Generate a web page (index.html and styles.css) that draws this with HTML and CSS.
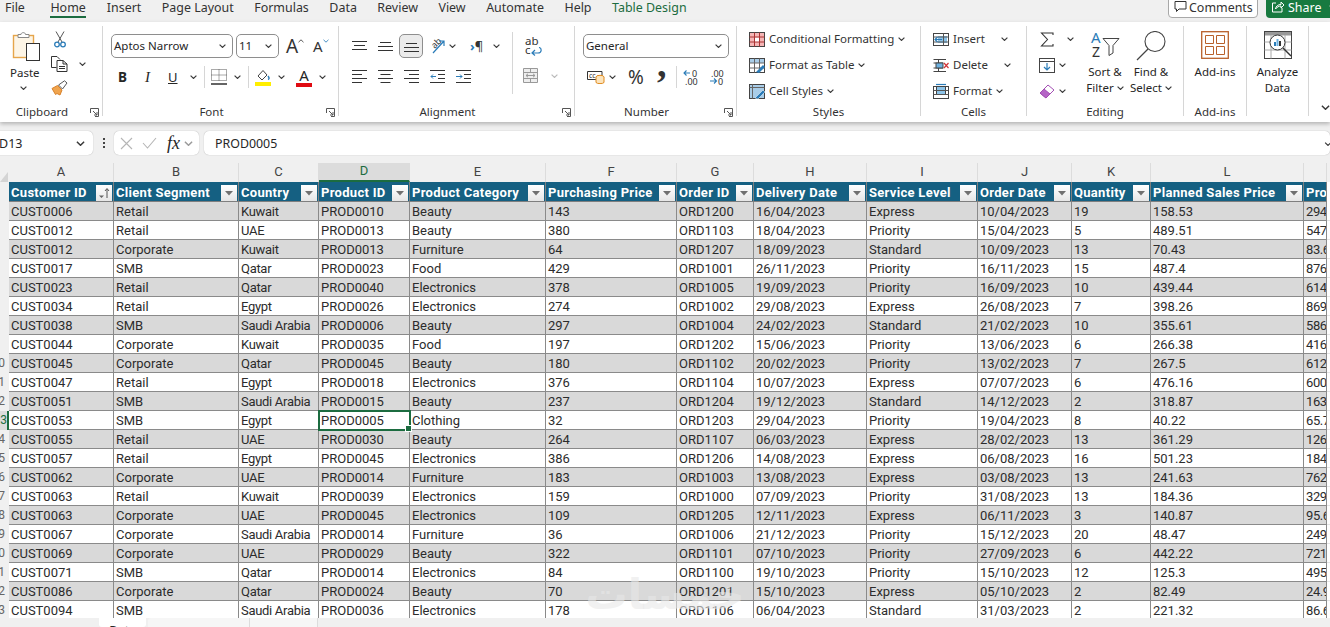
FILE: index.html
```html
<!DOCTYPE html>
<html lang="en">
<head>
<meta charset="utf-8">
<title>Excel</title>
<link rel="stylesheet" href="styles.css">
</head>
<body>
<svg class="defs" aria-hidden="true"><symbol id="chev" viewBox="0 0 7 4"><path d="M.6.6 3.5 3.4 6.4.6" fill="none" stroke="#3a3a3a" stroke-width="1.2"/></symbol><symbol id="launch" viewBox="0 0 9 9"><path d="M.5 5V.5H8.500V8.500H5M3 3l4 4M7 4v3H4" fill="none" stroke="#555" stroke-width="1"/></symbol></svg>

<nav class="tabs">
  <span class="tab">File</span><span class="tab tab-on">Home</span><span class="tab">Insert</span><span class="tab">Page Layout</span><span class="tab">Formulas</span><span class="tab">Data</span><span class="tab">Review</span><span class="tab">View</span><span class="tab">Automate</span><span class="tab">Help</span><span class="tab tab-design">Table Design</span>
  <span class="tabs-right">
    <span class="btn-comments"><svg width="13" height="13" viewBox="0 0 13 13"><path d="M1 1.500H12V9H5L2.500 11.500V9H1Z" fill="none" stroke="#333"/></svg>Comments</span>
    <span class="btn-share"><svg width="14" height="13" viewBox="0 0 14 13"><path d="M5 3H1.500V12H11V8M4.500 9C5 6 7 4.500 10 4.500V2L13 5 10 8V6C8 6 6 7 4.500 9Z" fill="none" stroke="#fff"/></svg>Share<svg class="chev" viewBox="0 0 7 4"><use href="#chev"/></svg></span>
  </span>
</nav>

<section class="ribbon">
  <div class="group g-clip">
    <div class="clip-body">
      <div class="paste">
        <svg width="28" height="30" viewBox="0 0 28 30"><rect x="1.500" y="4.500" width="20" height="22" fill="#fdf5e6" stroke="#e6a54a" stroke-width="1.400"/><path d="M6 6.500V3.500H9C9 1 13.500 1 13.500 3.500H17V6.500Z" fill="#fff" stroke="#888"/><rect x="14.500" y="12.500" width="13" height="17" fill="#fff" stroke="#333"/></svg>
        <span class="paste-text">Paste</span>
        <svg class="chev" viewBox="0 0 7 4"><use href="#chev"/></svg>
      </div>
      <div class="clip-tools">
        <svg width="12" height="17" viewBox="0 0 12 17"><path d="M2 .5 8 11M10 .5 4 11" stroke="#555" fill="none"/><circle cx="3" cy="13.500" r="2.300" fill="none" stroke="#2b7cb8" stroke-width="1.300"/><circle cx="9" cy="13.500" r="2.300" fill="none" stroke="#2b7cb8" stroke-width="1.300"/></svg>
        <span class="copy-line"><svg width="17" height="16" viewBox="0 0 17 16"><path d="M5.500 11.500H.5V.5H6L9 3.500M6 4.500H12L16 8V15.500H6ZM12 4.500V8H16M8 10.500H14M8 12.500H14" fill="none" stroke="#333"/></svg><svg class="chev" viewBox="0 0 7 4"><use href="#chev"/></svg></span>
        <svg width="17" height="16" viewBox="0 0 17 16"><path d="M1 8.500 6.500 5.500 11 10 9 15 6 13.500 4.500 14.500Z" fill="#f0a44e" stroke="#d8822a"/><path d="M7.500 5 13.500.8 16 3 11.500 9Z" fill="#fff" stroke="#555"/></svg>
      </div>
    </div>
    <div class="group-label pad-launch">Clipboard</div><svg class="launch" viewBox="0 0 9 9"><use href="#launch"/></svg>
  </div>

  <div class="group g-font">
    <div class="two-rows">
      <div class="row row-font1">
        <span class="combo combo-font">Aptos Narrow<svg class="chev" viewBox="0 0 7 4"><use href="#chev"/></svg></span>
        <span class="combo combo-size">11<svg class="chev" viewBox="0 0 7 4"><use href="#chev"/></svg></span>
        <span class="growa">A<svg class="chev-up" viewBox="0 0 7 4"><path d="M.6 3.400 3.500.6 6.400 3.400" fill="none" stroke="#3a3a3a"/></svg></span>
        <span class="growa growa-sm">A<svg class="chev-up" viewBox="0 0 7 4"><path d="M.6.6 3.500 3.400 6.400.6" fill="none" stroke="#2b7cb8"/></svg></span>
      </div>
      <div class="row row-font2">
        <b class="t-b">B</b><i class="t-i">I</i><u class="t-u">U</u><svg class="chev" viewBox="0 0 7 4"><use href="#chev"/></svg><span class="vsep"></span>
        <svg width="16" height="16" viewBox="0 0 16 16"><path d="M.5.5H15.500V11.500H.5ZM8 .5V11.500M.5 6H15.500" fill="none" stroke="#555" stroke-dasharray="1 1"/><path d="M0 15H16" stroke="#222" stroke-width="1.400"/></svg>
        <svg class="chev" viewBox="0 0 7 4"><use href="#chev"/></svg><span class="vsep"></span>
        <svg width="16" height="17" viewBox="0 0 16 17"><path d="M3 7 8 1.500 12 6 7 11Z" fill="#fff" stroke="#444"/><path d="M13 7C14.500 9 14.500 10 13 10.500" stroke="#2b7cb8" stroke-width="1.400" fill="none"/><rect y="13" width="16" height="4" fill="#ffee00"/></svg>
        <svg class="chev" viewBox="0 0 7 4"><use href="#chev"/></svg>
        <span class="t-color">A</span>
        <svg class="chev" viewBox="0 0 7 4"><use href="#chev"/></svg>
      </div>
    </div>
    <div class="group-label pad-launch">Font</div><svg class="launch" viewBox="0 0 9 9"><use href="#launch"/></svg>
  </div>

  <div class="group g-align">
    <div class="align-body">
      <div class="two-rows">
        <div class="row row-al1">
          <svg width="15" height="11" viewBox="0 0 15 11"><path d="M0 .5H15M2 4.500H13M0 8.500H15" stroke="#333"/></svg>
          <svg class="down4" width="15" height="11" viewBox="0 0 15 11"><path d="M2 .5H13M0 4.500H15M0 8.500H15" stroke="#333"/></svg>
          <span class="active-btn"><svg width="15" height="11" viewBox="0 0 15 11"><path d="M2 .5H13M0 4.500H15M0 8.500H15" stroke="#333"/></svg></span>
          <svg width="17" height="17" viewBox="0 0 17 17"><text x="2" y="10" font-size="9" transform="rotate(-45 5 6)" class="svgt">ab</text><path d="M4 15 15 3M10 3H15V8" fill="none" stroke="#2b7cb8" stroke-width="1.200"/></svg>
          <svg class="chev" viewBox="0 0 7 4"><use href="#chev"/></svg>
          <span class="para"><span class="para-mark">›</span>¶</span>
          <svg class="chev" viewBox="0 0 7 4"><use href="#chev"/></svg>
        </div>
        <div class="row row-al2">
          <svg width="15" height="14" viewBox="0 0 15 14"><path d="M0 .5H15M0 4.500H10M0 8.500H15M0 12.500H10" stroke="#333"/></svg>
          <svg width="15" height="14" viewBox="0 0 15 14"><path d="M0 .5H15M2.500 4.500H12.500M0 8.500H15M2.500 12.500H12.500" stroke="#333"/></svg>
          <svg width="15" height="14" viewBox="0 0 15 14"><path d="M0 .5H15M5 4.500H15M0 8.500H15M5 12.500H15" stroke="#333"/></svg>
          <svg width="15" height="14" viewBox="0 0 15 14"><path d="M0 .5H15M8 4.500H15M8 8.500H15M0 12.500H15" stroke="#333"/><path d="M6 6.500H1M3 4.500 1 6.500 3 8.500" fill="none" stroke="#2b7cb8"/></svg>
          <svg width="15" height="14" viewBox="0 0 15 14"><path d="M0 .5H15M8 4.500H15M8 8.500H15M0 12.500H15" stroke="#333"/><path d="M0 6.500H6M4 4.500 6 6.500 4 8.500" fill="none" stroke="#2b7cb8"/></svg>
        </div>
      </div>
      <span class="vsep vsep-tall"></span>
      <div class="wrap-col">
        <span class="wrap-text">ab<br>c<svg class="wrap-arrow" width="11" height="9" viewBox="0 0 11 9"><path d="M8 .5C11 1 11 6 7 6H1M4 3 1 6 4 8.500" fill="none" stroke="#2b7cb8" stroke-width="1.200"/></svg></span>
        <span class="merge"><svg width="15" height="15" viewBox="0 0 15 15"><path d="M.5.5H14.500V14.500H.5ZM.5 4.500H14.500M.5 10.500H14.500M7.500.5V4.500M7.500 10.500V14.500" fill="#eee" stroke="#999"/><path d="M3 7.500H12M5 5.800 3 7.500 5 9.200M10 5.800 12 7.500 10 9.200" fill="none" stroke="#999"/></svg><svg class="chev dim" viewBox="0 0 7 4"><use href="#chev"/></svg></span>
      </div>
    </div>
    <div class="group-label pad-launch">Alignment</div><svg class="launch" viewBox="0 0 9 9"><use href="#launch"/></svg>
  </div>

  <div class="group g-num">
    <div class="two-rows">
      <div class="row"><span class="combo combo-num">General<svg class="chev" viewBox="0 0 7 4"><use href="#chev"/></svg></span></div>
      <div class="row row-num2">
        <svg width="18" height="14" viewBox="0 0 18 14"><path d="M.5 1.500H15V9.500H.5Z" fill="#fff" stroke="#333"/><text x="2" y="7.800" font-size="7" class="svgt">cc</text><ellipse cx="13" cy="7" rx="4" ry="1.700" fill="#fbe4bd" stroke="#e08a1e"/><path d="M9 7V12.500C10 14 16 14 17 12.500V7" fill="#fbe4bd" stroke="#e08a1e"/></svg>
        <svg class="chev" viewBox="0 0 7 4"><use href="#chev"/></svg>
        <span class="t-pct">%</span>
        <span class="t-comma">,</span>
        <span class="vsep"></span>
        <span class="dec"><svg width="16" height="16" viewBox="0 0 16 16"><path d="M7 4H1M3.500 1.500 1 4 3.500 6.500" fill="none" stroke="#2b7cb8" stroke-width="1.100"/><text x="9" y="7.500" font-size="9" class="svgt">0</text><text x="2" y="15.500" font-size="9" class="svgt">.00</text></svg></span>
        <span class="dec"><svg width="16" height="16" viewBox="0 0 16 16"><text x="2" y="7.500" font-size="9" class="svgt">.00</text><path d="M1 12H7.500M5 9.500 7.500 12 5 14.500" fill="none" stroke="#2b7cb8" stroke-width="1.100"/><text x="9" y="15.500" font-size="9" class="svgt">0</text></svg></span>
      </div>
    </div>
    <div class="group-label pad-launch">Number</div><svg class="launch" viewBox="0 0 9 9"><use href="#launch"/></svg>
  </div>

  <div class="group g-styles">
    <div class="stack">
      <div class="line"><svg width="16" height="15" viewBox="0 0 16 15"><rect x=".5" y=".5" width="15" height="14" fill="#f5b5b5" stroke="#444"/><path d="M5.500 5.500H10.500V10H5.500Z" fill="#fff"/><path d="M.5 5H15.500M.5 10H15.500M5.500.5V14.500M10.500.5V14.500" stroke="#a33" fill="none"/></svg>Conditional Formatting<svg class="chev" viewBox="0 0 7 4"><use href="#chev"/></svg></div>
      <div class="line"><svg width="16" height="15" viewBox="0 0 16 15"><rect x=".5" y=".5" width="15" height="14" fill="#fff" stroke="#444"/><rect x="1" y="1" width="14" height="4" fill="#a9cde8"/><path d="M.5 5H15.500M.5 10H15.500M5.500.5V14.500M10.500.5V14.500" stroke="#666" fill="none"/><path d="M7 14 14 7 16 9 10 15Z" fill="#2b7cb8"/></svg>Format as Table<svg class="chev" viewBox="0 0 7 4"><use href="#chev"/></svg></div>
      <div class="line"><svg width="16" height="15" viewBox="0 0 16 15"><rect x=".5" y=".5" width="15" height="14" fill="#a9cde8" stroke="#444"/><path d="M.5 3.500H15.500M3.500.5V14.500" stroke="#666" fill="none"/><path d="M6 14 14 6 16 8 9 15Z" fill="#2b7cb8" stroke="#fff" stroke-width=".5"/></svg>Cell Styles<svg class="chev" viewBox="0 0 7 4"><use href="#chev"/></svg></div>
    </div>
    <div class="group-label">Styles</div>
  </div>

  <div class="group g-cells">
    <div class="stack">
      <div class="line"><svg width="16" height="15" viewBox="0 0 16 15"><rect x=".5" y="1.500" width="15" height="12" fill="#fff" stroke="#444"/><rect x="5" y="4" width="9" height="7" fill="#8cc3e8"/><path d="M.5 5H15.500M.5 10H15.500M10.500 1.500V13.500" stroke="#555"/><path d="M9 7.500H2M4.500 5 2 7.500 4.500 10" fill="none" stroke="#2b7cb8" stroke-width="1.200"/></svg>Insert<svg class="chev chev-far" viewBox="0 0 7 4"><use href="#chev"/></svg></div>
      <div class="line"><svg width="16" height="15" viewBox="0 0 16 15"><path d="M.5 1.500H13M.5 13.500H13M5.500 1.500V13.500M.5 5H10M.5 10H10" stroke="#444" fill="none"/><rect x="3" y="5" width="7" height="5" fill="#6db1e0" stroke="#444"/><path d="M11 5 15.500 10M15.500 5 11 10" stroke="#d13438" stroke-width="1.200"/></svg>Delete<svg class="chev chev-far2" viewBox="0 0 7 4"><use href="#chev"/></svg></div>
      <div class="line"><svg width="16" height="16" viewBox="0 0 16 16"><rect x=".5" y="3.500" width="15" height="12" fill="#fff" stroke="#444"/><rect x="3.500" y="3.500" width="9" height="8" fill="#8cc3e8" stroke="#444"/><path d="M.5 7.500H15.500M.5 11.500H15.500" stroke="#555"/><path d="M3 1.500H13" stroke="#2b7cb8" stroke-width="1.200"/></svg>Format<svg class="chev" viewBox="0 0 7 4"><use href="#chev"/></svg></div>
    </div>
    <div class="group-label">Cells</div>
  </div>

  <div class="group g-edit">
    <div class="edit-body">
      <div class="stack stack-edit">
        <div class="line"><svg width="16" height="15" viewBox="0 0 16 15"><path d="M14 3V1H2.500L8.500 7.500 2.500 14H14V12" fill="none" stroke="#333" stroke-width="1.100"/></svg><svg class="chev chev-sigma" viewBox="0 0 7 4"><use href="#chev"/></svg></div>
        <div class="line"><svg width="16" height="15" viewBox="0 0 16 15"><rect x=".5" y=".5" width="15" height="14" fill="#fff" stroke="#444"/><path d="M.5 3.500H15.500" stroke="#444"/><path d="M8 5V12M5 9 8 12 11 9" fill="none" stroke="#2b7cb8" stroke-width="1.200"/></svg><svg class="chev" viewBox="0 0 7 4"><use href="#chev"/></svg></div>
        <div class="line"><svg width="16" height="15" viewBox="0 0 16 15"><path d="M1 9 9 1 15 6 7 14Z" fill="#fff" stroke="#a34fb4"/><path d="M1 9 5 5 11 10 7 14Z" fill="#b565c6" stroke="#a34fb4"/></svg><svg class="chev" viewBox="0 0 7 4"><use href="#chev"/></svg></div>
      </div>
      <div class="big">
        <svg class="big-icon icon-sort" width="30" height="27" viewBox="0 0 30 27"><text x="1" y="12" font-size="15" fill="#2b7cb8" class="svgt">A</text><text x="2" y="26" font-size="14" class="svgt">Z</text><path d="M13 7.500H29L23 14.500V22L19 24.500V14.500Z" fill="#fff" stroke="#444"/></svg>
        <span>Sort &amp;</span>
        <span>Filter<svg class="chev" viewBox="0 0 7 4"><use href="#chev"/></svg></span>
      </div>
      <div class="big">
        <svg class="big-icon icon-find" width="30" height="30" viewBox="0 0 30 30"><circle cx="19" cy="10.500" r="10" fill="#fff" stroke="#444" stroke-width="1.100"/><path d="M12 18 1 29" stroke="#444" stroke-width="1.200"/></svg>
        <span>Find &amp;</span>
        <span>Select<svg class="chev" viewBox="0 0 7 4"><use href="#chev"/></svg></span>
      </div>
    </div>
    <div class="group-label">Editing</div>
  </div>

  <div class="group g-add">
    <div class="big">
      <svg class="big-icon" width="28" height="28" viewBox="0 0 28 28"><rect x=".7" y=".7" width="26.600" height="26.600" fill="#fff" stroke="#b8602a" stroke-width="1.300"/><path d="M4.500 4.500H12.500V12.500H4.500ZM15.500 4.500H23.500V12.500H15.500ZM4.500 15.500H12.500V23.500H4.500ZM15.500 15.500H23.500V23.500H15.500Z" fill="none" stroke="#b8602a"/></svg>
      <span>Add-ins</span>
    </div>
    <div class="group-label">Add-ins</div>
  </div>

  <div class="group g-analyze">
    <div class="big">
      <svg class="big-icon" width="28" height="28" viewBox="0 0 28 28"><rect x=".5" y=".5" width="27" height="27" fill="#fff" stroke="#444"/><rect x="1" y="1" width="26" height="3.500" fill="#999"/><path d="M.5 11H27.500M.5 19H27.500M7 4V27.500M21 4V27.500" stroke="#aaa"/><circle cx="13.500" cy="11.500" r="7.500" fill="#fff" stroke="#333"/><path d="M10 11H12V15H10Z" fill="#2b7cb8"/><path d="M12.500 8H14.500V15H12.500Z" fill="#6db1e0"/><path d="M15 10H17V15H15Z" fill="#333"/><path d="M19 17 27 25" stroke="#333" stroke-width="1.400"/></svg>
      <span>Analyze</span>
      <span>Data</span>
    </div>
  </div>
  <svg class="collapse" viewBox="0 0 7 4"><use href="#chev"/></svg>
</section>

<section class="fbar">
  <div class="namebox">D13<svg class="chev" viewBox="0 0 7 4"><use href="#chev"/></svg></div>
  <div class="dots"><i></i><i></i><i></i></div>
  <div class="fbtns">
    <svg width="13" height="13" viewBox="0 0 13 13"><path d="M1 1 12 12M12 1 1 12" stroke="#b5b5b5" stroke-width="1.100"/></svg>
    <svg width="15" height="12" viewBox="0 0 15 12"><path d="M1 6 5.500 11 14 1" fill="none" stroke="#b5b5b5" stroke-width="1.100"/></svg>
    <span class="fx">fx</span>
    <svg class="chev" viewBox="0 0 7 4"><use href="#chev"/></svg>
  </div>
  <div class="finput">PROD0005<svg class="chev" viewBox="0 0 7 4"><use href="#chev"/></svg></div>
</section>

<main class="grid">
<table class="sheet">
<colgroup><col class="c0"><col class="c1"><col class="c2"><col class="c3"><col class="c4"><col class="c5"><col class="c6"><col class="c7"><col class="c8"><col class="c9"><col class="c10"><col class="c11"><col class="c12"><col class="c13"><col class="c14"></colgroup>
<thead>
<tr class="letters"><th class="corner"><svg width="8" height="10" viewBox="0 0 8 10"><path d="M8 0V10H0Z" fill="#d4d4d4"/></svg></th><th>A</th><th>B</th><th>C</th><th class="letter-on">D</th><th>E</th><th>F</th><th>G</th><th>H</th><th>I</th><th>J</th><th>K</th><th>L</th><th></th><th class="blank"></th></tr>
<tr class="heads"><th class="rh"></th>
<th><div class="hc">Customer ID<span class="fb"><svg width="16" height="16" viewBox="0 0 16 16"><path d="M3 10.500H8L5.500 13Z" fill="#666"/><path d="M11 13V4M9 6 11 3.500 13 6" fill="none" stroke="#555"/></svg></span></div></th>
<th><div class="hc">Client Segment<span class="fb"><svg width="16" height="16" viewBox="0 0 16 16"><path d="M4 6H12L8 10.500Z" fill="#707070"/></svg></span></div></th>
<th><div class="hc">Country<span class="fb"><svg width="16" height="16" viewBox="0 0 16 16"><path d="M4 6H12L8 10.500Z" fill="#707070"/></svg></span></div></th>
<th><div class="hc">Product ID<span class="fb"><svg width="16" height="16" viewBox="0 0 16 16"><path d="M4 6H12L8 10.500Z" fill="#707070"/></svg></span></div></th>
<th><div class="hc">Product Category<span class="fb"><svg width="16" height="16" viewBox="0 0 16 16"><path d="M4 6H12L8 10.500Z" fill="#707070"/></svg></span></div></th>
<th><div class="hc">Purchasing Price<span class="fb"><svg width="16" height="16" viewBox="0 0 16 16"><path d="M4 6H12L8 10.500Z" fill="#707070"/></svg></span></div></th>
<th><div class="hc">Order ID<span class="fb"><svg width="16" height="16" viewBox="0 0 16 16"><path d="M4 6H12L8 10.500Z" fill="#707070"/></svg></span></div></th>
<th><div class="hc">Delivery Date<span class="fb"><svg width="16" height="16" viewBox="0 0 16 16"><path d="M4 6H12L8 10.500Z" fill="#707070"/></svg></span></div></th>
<th><div class="hc">Service Level<span class="fb"><svg width="16" height="16" viewBox="0 0 16 16"><path d="M4 6H12L8 10.500Z" fill="#707070"/></svg></span></div></th>
<th><div class="hc">Order Date<span class="fb"><svg width="16" height="16" viewBox="0 0 16 16"><path d="M4 6H12L8 10.500Z" fill="#707070"/></svg></span></div></th>
<th><div class="hc">Quantity<span class="fb"><svg width="16" height="16" viewBox="0 0 16 16"><path d="M4 6H12L8 10.500Z" fill="#707070"/></svg></span></div></th>
<th><div class="hc">Planned Sales Price<span class="fb"><svg width="16" height="16" viewBox="0 0 16 16"><path d="M4 6H12L8 10.500Z" fill="#707070"/></svg></span></div></th>
<th><div class="hc">Profit</div></th>
<th class="blank"></th></tr>
</thead>
<tbody>
<tr><th class="rh"></th><td>CUST0006</td><td>Retail</td><td>Kuwait</td><td>PROD0010</td><td>Beauty</td><td>143</td><td>ORD1200</td><td>16/04/2023</td><td>Express</td><td>10/04/2023</td><td>19</td><td>158.53</td><td>294</td><td class="blank"></td></tr>
<tr><th class="rh"></th><td>CUST0012</td><td>Retail</td><td>UAE</td><td>PROD0013</td><td>Beauty</td><td>380</td><td>ORD1103</td><td>18/04/2023</td><td>Priority</td><td>15/04/2023</td><td>5</td><td>489.51</td><td>547</td><td class="blank"></td></tr>
<tr><th class="rh"></th><td>CUST0012</td><td>Corporate</td><td>Kuwait</td><td>PROD0013</td><td>Furniture</td><td>64</td><td>ORD1207</td><td>18/09/2023</td><td>Standard</td><td>10/09/2023</td><td>13</td><td>70.43</td><td>83.6</td><td class="blank"></td></tr>
<tr><th class="rh"></th><td>CUST0017</td><td>SMB</td><td>Qatar</td><td>PROD0023</td><td>Food</td><td>429</td><td>ORD1001</td><td>26/11/2023</td><td>Priority</td><td>16/11/2023</td><td>15</td><td>487.4</td><td>876</td><td class="blank"></td></tr>
<tr><th class="rh"></th><td>CUST0023</td><td>Retail</td><td>Qatar</td><td>PROD0040</td><td>Electronics</td><td>378</td><td>ORD1005</td><td>19/09/2023</td><td>Priority</td><td>16/09/2023</td><td>10</td><td>439.44</td><td>614</td><td class="blank"></td></tr>
<tr><th class="rh"></th><td>CUST0034</td><td>Retail</td><td>Egypt</td><td>PROD0026</td><td>Electronics</td><td>274</td><td>ORD1002</td><td>29/08/2023</td><td>Express</td><td>26/08/2023</td><td>7</td><td>398.26</td><td>869</td><td class="blank"></td></tr>
<tr><th class="rh"></th><td>CUST0038</td><td>SMB</td><td>Saudi Arabia</td><td>PROD0006</td><td>Beauty</td><td>297</td><td>ORD1004</td><td>24/02/2023</td><td>Standard</td><td>21/02/2023</td><td>10</td><td>355.61</td><td>586</td><td class="blank"></td></tr>
<tr><th class="rh"></th><td>CUST0044</td><td>Corporate</td><td>Kuwait</td><td>PROD0035</td><td>Food</td><td>197</td><td>ORD1202</td><td>15/06/2023</td><td>Priority</td><td>13/06/2023</td><td>6</td><td>266.38</td><td>416</td><td class="blank"></td></tr>
<tr><th class="rh">10</th><td>CUST0045</td><td>Corporate</td><td>Qatar</td><td>PROD0045</td><td>Beauty</td><td>180</td><td>ORD1102</td><td>20/02/2023</td><td>Priority</td><td>13/02/2023</td><td>7</td><td>267.5</td><td>612</td><td class="blank"></td></tr>
<tr><th class="rh">11</th><td>CUST0047</td><td>Retail</td><td>Egypt</td><td>PROD0018</td><td>Electronics</td><td>376</td><td>ORD1104</td><td>10/07/2023</td><td>Express</td><td>07/07/2023</td><td>6</td><td>476.16</td><td>600</td><td class="blank"></td></tr>
<tr><th class="rh">12</th><td>CUST0051</td><td>SMB</td><td>Saudi Arabia</td><td>PROD0015</td><td>Beauty</td><td>237</td><td>ORD1204</td><td>19/12/2023</td><td>Standard</td><td>14/12/2023</td><td>2</td><td>318.87</td><td>163</td><td class="blank"></td></tr>
<tr><th class="rh rh-on">13</th><td>CUST0053</td><td>SMB</td><td>Egypt</td><td class="cell-on">PROD0005</td><td>Clothing</td><td>32</td><td>ORD1203</td><td>29/04/2023</td><td>Priority</td><td>19/04/2023</td><td>8</td><td>40.22</td><td>65.7</td><td class="blank"></td></tr>
<tr><th class="rh">14</th><td>CUST0055</td><td>Retail</td><td>UAE</td><td>PROD0030</td><td>Beauty</td><td>264</td><td>ORD1107</td><td>06/03/2023</td><td>Express</td><td>28/02/2023</td><td>13</td><td>361.29</td><td>126</td><td class="blank"></td></tr>
<tr><th class="rh">15</th><td>CUST0057</td><td>Retail</td><td>Egypt</td><td>PROD0045</td><td>Electronics</td><td>386</td><td>ORD1206</td><td>14/08/2023</td><td>Express</td><td>06/08/2023</td><td>16</td><td>501.23</td><td>184</td><td class="blank"></td></tr>
<tr><th class="rh">16</th><td>CUST0062</td><td>Corporate</td><td>UAE</td><td>PROD0014</td><td>Furniture</td><td>183</td><td>ORD1003</td><td>13/08/2023</td><td>Express</td><td>03/08/2023</td><td>13</td><td>241.63</td><td>762</td><td class="blank"></td></tr>
<tr><th class="rh">17</th><td>CUST0063</td><td>Retail</td><td>Kuwait</td><td>PROD0039</td><td>Electronics</td><td>159</td><td>ORD1000</td><td>07/09/2023</td><td>Priority</td><td>31/08/2023</td><td>13</td><td>184.36</td><td>329</td><td class="blank"></td></tr>
<tr><th class="rh">18</th><td>CUST0063</td><td>Corporate</td><td>UAE</td><td>PROD0045</td><td>Electronics</td><td>109</td><td>ORD1205</td><td>12/11/2023</td><td>Express</td><td>06/11/2023</td><td>3</td><td>140.87</td><td>95.6</td><td class="blank"></td></tr>
<tr><th class="rh">19</th><td>CUST0067</td><td>Corporate</td><td>Saudi Arabia</td><td>PROD0014</td><td>Furniture</td><td>36</td><td>ORD1006</td><td>21/12/2023</td><td>Priority</td><td>15/12/2023</td><td>20</td><td>48.47</td><td>249</td><td class="blank"></td></tr>
<tr><th class="rh">20</th><td>CUST0069</td><td>Corporate</td><td>UAE</td><td>PROD0029</td><td>Beauty</td><td>322</td><td>ORD1101</td><td>07/10/2023</td><td>Priority</td><td>27/09/2023</td><td>6</td><td>442.22</td><td>721</td><td class="blank"></td></tr>
<tr><th class="rh">21</th><td>CUST0071</td><td>SMB</td><td>Qatar</td><td>PROD0014</td><td>Electronics</td><td>84</td><td>ORD1100</td><td>19/10/2023</td><td>Priority</td><td>15/10/2023</td><td>12</td><td>125.3</td><td>495</td><td class="blank"></td></tr>
<tr><th class="rh">22</th><td>CUST0086</td><td>Corporate</td><td>Qatar</td><td>PROD0024</td><td>Beauty</td><td>70</td><td>ORD1201</td><td>15/10/2023</td><td>Express</td><td>05/10/2023</td><td>2</td><td>82.49</td><td>24.9</td><td class="blank"></td></tr>
<tr><th class="rh">23</th><td>CUST0094</td><td>SMB</td><td>Saudi Arabia</td><td>PROD0036</td><td>Electronics</td><td>178</td><td>ORD1106</td><td>06/04/2023</td><td>Standard</td><td>31/03/2023</td><td>2</td><td>221.32</td><td>86.6</td><td class="blank"></td></tr>
</tbody>
</table>
</main>

<footer class="sheetbar">
  <span class="sheet-tab">Data</span>
  <span class="scroll-seg seg1"></span><span class="scroll-seg seg2"></span><span class="scroll-seg seg3"></span>
</footer>

<div class="watermark">خمسات</div>
</body>
</html>
```

FILE: styles.css
```css
* { box-sizing: border-box; }
html, body { margin: 0; padding: 0; }
body {
  position: relative;
  width: 1330px;
  height: 627px;
  overflow: hidden;
  background: #f0f0f0;
  color: #262626;
  font: 11.5px/16px "Noto Sans", sans-serif;
}
.defs { width: 0; height: 0; display: block; }
svg { display: block; flex: none; }
.chev { width: 7px; height: 4px; }
.svgt { font-family: "Noto Sans", sans-serif; fill: #333; }
.svgt[fill="#2b7cb8"] { fill: #2b7cb8; }

/* tabs */
.tabs {
  height: 22px;
  display: flex;
  gap: 20.5px;
  padding-left: 5px;
  font-size: 12.45px;
  line-height: 15px;
  color: #333;
  overflow: hidden;
  white-space: nowrap;
}
.tab { height: 18px; }
.tab-on { margin-left: 4.5px; padding: 0 .5px; border-bottom: 2px solid #1c6c40; }
.tab-design { color: #1c6c40; }
.tabs-right { margin-left: auto; display: flex; gap: 8px; margin-right: -12px; align-items: flex-start; }
.btn-comments, .btn-share {
  margin-top: -6px;
  height: 24px;
  padding-top: 5px;
  display: flex;
  border-radius: 4px;
}
.btn-comments { width: 90px; padding-left: 5px; gap: 2px; background: #fff; border: 1px solid #a8a8a8; }
.btn-share { width: 76px; padding-left: 5px; gap: 3px; background: #187a40; color: #fff; padding-top: 6px; }
.btn-share .chev { margin: 5px 0 0 5px; filter: invert(1); }

/* ribbon */
.ribbon {
  position: relative;
  z-index: 2;
  height: 100px;
  display: flex;
  padding-top: 4px;
  background: #fff;
  box-shadow: 0 2px 4px rgba(0,0,0,.25);
}
.group {
  position: relative;
  height: 90px;
  flex: none;
  display: flex;
  flex-direction: column;
  border-right: 1px solid #d6d6d6;
}
.g-clip { width: 103px; }
.g-font { width: 236px; padding-left: 8px; }
.g-align { width: 236px; padding-left: 13px; }
.g-num { width: 162px; padding-left: 8px; }
.g-styles { width: 184px; padding-left: 12px; }
.g-cells { width: 106px; padding-left: 12px; }
.g-edit { width: 157px; padding-left: 12px; }
.g-add { width: 63px; }
.g-analyze { width: 62px; }
.group-label {
  margin-top: auto;
  margin-bottom: -4px;
  height: 16px;
  text-align: center;
  color: #333;
  align-self: stretch;
}
.g-font .group-label { margin-left: -8px; }
.g-align .group-label { margin-left: -13px; }
.g-num .group-label { margin-left: -8px; }
.g-styles .group-label, .g-cells .group-label, .g-edit .group-label { margin-left: -12px; }
.pad-launch { padding-right: 18px; }
.launch { position: absolute; right: 3px; bottom: -1px; width: 9px; height: 9px; }
.collapse { position: absolute; right: 0; bottom: 12px; width: 9px; height: 5px; }

/* clipboard */
.clip-body { display: flex; padding: 5px 0 0 12px; }
.paste { width: 37px; display: flex; flex-direction: column; align-items: flex-start; }
.paste-text { margin: 4px 0 0 -2px; line-height: 16px; }
.paste .chev { margin: 5px 0 0 8px; }
.clip-tools { margin-left: 2px; display: flex; flex-direction: column; gap: 8px; padding-left: 3px; }
.clip-tools > svg:last-child { margin-left: -3px; }
.copy-line { display: flex; align-items: center; gap: 11px; margin-left: -3px; }

/* two-row groups */
.two-rows { padding-top: 8px; display: flex; flex-direction: column; gap: 8px; }
.row { display: grid; align-items: center; justify-items: start; grid-auto-flow: column; height: 24px; }
.row-font1 { grid-template-columns: 125px 50px 27px 15px; }
.row-font2 { height: 22px; padding-left: 7px; grid-template-columns: 27px 23px 22px 14px 7px 23px 14px 7px 23px 18px 23px auto; }
.combo {
  height: 24px;
  display: flex;
  align-items: center;
  justify-content: space-between;
  padding: 0 6px 0 2px;
  background: #fff;
  border: 1px solid #8e8e8e;
  border-radius: 5px;
}
.combo-font { width: 122px; }
.combo-size { width: 43px; }
.combo-num { width: 146px; }
.growa { display: flex; font-size: 19px; line-height: 24px; color: #333; }
.growa .chev-up { width: 6px; height: 4px; margin-top: 5px; }
.growa-sm { font-size: 15px; }
.t-b, .t-i, .t-u { font-family: "Noto Sans", sans-serif; font-size: 13.5px; }
.t-i { font-family: "Liberation Serif", serif; font-size: 15px; }
.t-u { font-size: 13px; }
.t-color { width: 16px; border-bottom: 4px solid #e00b12; font-size: 15px; line-height: 15px; text-align: center; }
.vsep { width: 1px; height: 22px; background: #d6d6d6; }
.vsep-tall { height: 62px; margin: 6px 12px 0 0; }

/* alignment */
.align-body { display: flex; }
.align-body .two-rows { width: 160px; }
.row-al1 { grid-template-columns: 26px 21px 30px 20px 21px 23px auto; }
.row-al1 .down4 { margin-top: 3px; }
.active-btn { width: 24px; height: 24px; padding: 8px 0 0 4px; background: #ebebeb; border: 1px solid #8e8e8e; border-radius: 5px; }
.para { font-size: 13px; color: #333; }
.para-mark { color: #2b7cb8; font-weight: 700; }
.row-al2 { height: 22px; grid-template-columns: 26px 26px 26px 26px 26px; }
.wrap-col { display: flex; flex-direction: column; padding-top: 10px; gap: 13px; }
.wrap-text { font-size: 11.5px; line-height: 9px; height: 19px; color: #333; display: block; }
.wrap-arrow { display: inline-block; vertical-align: -2px; }
.merge { display: flex; align-items: center; gap: 13px; margin-left: -2px; }
.chev.dim { opacity: .35; }

/* number */
.row-num2 { height: 22px; padding-left: 4px; grid-template-columns: 22px 19px 29px 19px 7px 26px auto; }
.t-pct { font-size: 19px; line-height: 20px; color: #333; }
.t-comma { margin-top: -26px; font-family: "Liberation Serif", serif; font-weight: 700; font-size: 38px; line-height: 12px; color: #333; }

/* stacked lists */
.stack { display: flex; flex-direction: column; }
.line { height: 26px; display: flex; align-items: center; gap: 4px; white-space: nowrap; color: #333; }
.chev-far { margin-left: 12px; }
.chev-far2 { margin-left: 12px; }
.stack-edit { width: 43px; }
.chev-sigma { margin-left: 8px; }
.edit-body { display: flex; }

/* big buttons */
.big { width: 46px; padding-top: 5px; display: flex; flex-direction: column; align-items: center; white-space: nowrap; }
.big-icon { margin-bottom: 5px; }
.big span { display: flex; align-items: center; gap: 3px; height: 16px; }
.icon-sort { margin-bottom: 6px; }
.icon-find { margin-bottom: 3px; }
.g-add .big, .g-analyze .big { width: 100%; }

/* formula bar */
.fbar { height: 41px; display: flex; padding-top: 9px; }
.fbar > * { height: 24px; flex: none; background: #fff; border-radius: 5px; box-shadow: 0 0 1px rgba(0,0,0,.35); display: flex; align-items: center; }
.namebox { margin-left: -10px; width: 103px; padding: 1px 8px 0 9px; justify-content: space-between; font-size: 12.5px; }
.namebox .chev { width: 9px; height: 5px; }
.fbar > .dots { width: 21px; background: none; box-shadow: none; flex-direction: column; justify-content: center; gap: 2px; }
.dots i { width: 2px; height: 2px; background: #444; }
.fbtns { width: 85px; padding-left: 6px; gap: 9px; }
.fx { font: italic 400 18px "Liberation Serif", serif; margin-left: 1px; }
.fbtns .chev { margin-left: -5px; opacity: .5; width: 9px; height: 5px; }
.finput { margin-left: 5px; flex: 1 !important; padding: 1px 0 0 11px; justify-content: space-between; font-size: 12.4px; }
.finput .chev { margin-right: -2px; width: 8px; }

/* grid */
.grid { height: 455px; overflow: hidden; background: #fff; }
.sheet {
  width: 1330px;
  table-layout: fixed;
  border-collapse: separate;
  border-spacing: 0;
  font: 13px/15px Roboto, sans-serif;
  color: #2c2c2c;
}
.c0 { width: 9px; } .c1 { width: 105px; } .c2 { width: 125px; } .c3 { width: 80px; } .c4 { width: 91px; }
.c5 { width: 136px; } .c6 { width: 131px; } .c7 { width: 77px; } .c8 { width: 113px; } .c9 { width: 111px; }
.c10 { width: 94px; } .c11 { width: 79px; } .c12 { width: 153px; } .c13 { width: 23px; } .c14 { width: 3px; }
.sheet td, .sheet th { padding: 0; overflow: hidden; white-space: nowrap; }
.letters th {
  height: 19px;
  padding-bottom: 2px;
  background: #f0f0f0;
  border-right: 1px solid #dcdcdc;
  font-weight: 400;
  font-size: 13px;
  color: #444;
}
.letters .corner { padding-bottom: 0; border-right: 0; }
.letters .corner svg { margin-top: 8px; height: 10px; }
.letter-on { background: #dcdcdc !important; border-bottom: 2px solid #1c6c40; color: #1c6c40 !important; }
.heads th { height: 20px; background: #156082; color: #fff; border-right: 1px solid #7f7f7f; border-bottom: 1px solid #7f7f7f; }
.hc { display: flex; align-items: center; justify-content: space-between; height: 19px; padding: 2px 0 0 2px; font-weight: 700; letter-spacing: .3px; }
.fb { width: 16px; height: 16px; margin-right: 1px; background: linear-gradient(#fff, #e6e6e6); flex: none; letter-spacing: 0; }
.heads .rh, .sheet tbody .rh { background: #f0f0f0; border: 0; }
.rh {
  direction: rtl;
  text-align: right;
  font-weight: 400;
  font-size: 12px;
  color: #666;
  padding-right: 4px !important;
}
.rh-on { border-right: 2px solid #1c6c40 !important; background: #dcdcdc !important; color: #1c6c40; padding-right: 2px !important; }
.sheet tbody td { height: 19px; padding-left: 2px; border-right: 1px solid #8a8a8a; border-bottom: 1px solid #8a8a8a; }
.sheet tbody tr:nth-child(odd) td { background: #d9d9d9; }
.sheet tbody td:nth-child(4) { letter-spacing: -.3px; }
.sheet tbody td:nth-child(14) { letter-spacing: -.4px; }
.sheet td.blank, .sheet tbody tr:nth-child(odd) td.blank { background: #fff; border-right: 0; border-bottom: 1px solid #e4e4e4; }
.heads th.blank { background: #fff; border: 0; }
.letters th.blank { border-right: 0; }
.sheet .cell-on { position: relative; overflow: visible; outline: 2px solid #1c6c40; outline-offset: -1px; }
.cell-on::after { content: ""; position: absolute; right: -3px; bottom: -3px; width: 5px; height: 5px; background: #1c6c40; border: 1px solid #fff; box-sizing: content-box; }

/* sheet bar */
.sheetbar { height: 9px; display: flex; padding-left: 99px; background: #f0f0f0; }
.sheet-tab { width: 47px; padding-top: 6px; background: #fff; text-align: center; font-size: 12px; line-height: 14px; overflow: hidden; border-radius: 0 0 3px 3px; }
.scroll-seg { height: 9px; background: #f6f6f6; border-right: 1px solid #dcdcdc; }
.seg1 { width: 2px; background: none; border: 0; }
.seg2 { width: 102px; border-radius: 3px 0 0 0; }
.seg3 { width: 68px; }

.watermark {
  position: absolute;
  left: 585px;
  top: 570px;
  width: 160px;
  text-align: center;
  font: 700 42px/50px "DejaVu Sans", sans-serif;
  color: rgba(232, 232, 232, .6);
  pointer-events: none;
}
```
